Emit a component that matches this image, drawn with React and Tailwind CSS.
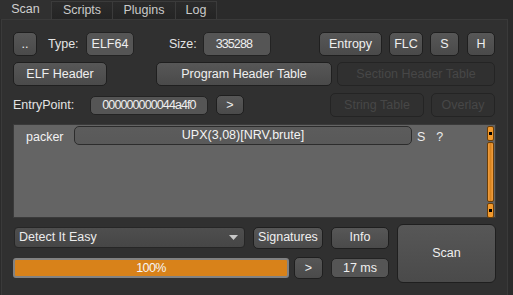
import React from 'react'

const btn =
  'flex items-center justify-center rounded-[5px] border border-[#1f1f1f] bg-gradient-to-b from-[#575757] to-[#4a4a4a] text-[#efefef]'
const field =
  'flex items-center justify-center rounded-[5px] border border-[#232323] bg-[#555555] text-[#efefef] tracking-[-0.9px]'
const disabled =
  'flex items-center justify-center rounded-[5px] border border-[#242424] bg-[#303030] text-[#474747]'

function Tab({ label, active, w }) {
  return (
    <div
      className={
        active
          ? 'flex h-[19px] items-center justify-center bg-[#303030] text-[#cfcfcf]'
          : 'flex h-[18px] items-center justify-center border-l border-t border-[#3b3b3b] bg-gradient-to-b from-[#2b2b2b] to-[#242424] text-[#cacaca]'
      }
      style={{ width: w }}
    >
      {label}
    </div>
  )
}

function ScrollBar() {
  return (
    <div className="ml-auto flex h-[92px] w-[7px] flex-col gap-[1px]">
      <div className="flex h-[15px] items-center justify-center rounded-[2px] border border-[#6a3e08] bg-[#f29a2e]">
        <div className="h-[3px] w-[3px] bg-black" />
      </div>
      <div className="flex-1 rounded-[2px] border border-[#6a3e08] bg-gradient-to-r from-[#f4a040] via-[#d88420] to-[#f4a040]" />
      <div className="flex h-[15px] items-center justify-center rounded-[2px] border border-[#6a3e08] bg-[#f29a2e]">
        <div className="h-[3px] w-[3px] bg-black" />
      </div>
    </div>
  )
}

export default function App() {
  return (
    <div className="h-[295px] w-[513px] overflow-hidden bg-[#2b2b2b] font-['Liberation_Sans',Arial,sans-serif] text-[12.5px] text-[#ececec]">
      {/* Tabs */}
      <div className="flex h-[19px] items-end">
        <Tab label="Scan" active w={51} />
        <Tab label="Scripts" w={61} />
        <Tab label="Plugins" w={63} />
        <div className="border-r border-[#3b3b3b]">
          <Tab label="Log" w={41} />
        </div>
      </div>

      {/* Panel */}
      <div className="ml-[1px] h-[277px] w-[507px] border border-[#3a3a3a] bg-[#303030] px-[11px] pt-[12px]">
        {/* Row 1 */}
        <div className="flex h-[24px] items-center">
          <div className={`${btn} h-[24px] w-[24px]`}>..</div>
          <span className="ml-[11px] w-[38px] text-[#e4e4e4]">Type:</span>
          <div className={`${field} h-[24px] w-[48px] tracking-normal`}>ELF64</div>
          <span className="ml-[35px] w-[34px] text-[#e4e4e4]">Size:</span>
          <div className={`${field} h-[24px] w-[68px] justify-end pr-[18px]`}>335288</div>
          <div className={`${btn} ml-[48px] h-[24px] w-[63px]`}>Entropy</div>
          <div className={`${btn} ml-[7px] h-[24px] w-[34px]`}>FLC</div>
          <div className={`${btn} ml-[7px] h-[24px] w-[29px]`}>S</div>
          <div className={`${btn} ml-[8px] h-[24px] w-[28px]`}>H</div>
        </div>

        {/* Row 2 */}
        <div className="mt-[6px] flex h-[24px] items-center">
          <div className={`${btn} h-[24px] w-[94px]`}>ELF Header</div>
          <div className={`${btn} ml-[49px] h-[24px] w-[176px]`}>Program Header Table</div>
          <div className={`${disabled} ml-[5px] h-[24px] w-[158px]`}>Section Header Table</div>
        </div>

        {/* Row 3 */}
        <div className="mt-[7px] flex h-[24px] items-center">
          <span className="w-[77px] text-[#e4e4e4]">EntryPoint:</span>
          <div className={`${field} h-[19px] w-[118px]`}>000000000044a4f0</div>
          <div className={`${btn} ml-[8px] h-[20px] w-[28px]`}>&gt;</div>
          <div className={`${disabled} ml-[86px] h-[24px] w-[94px]`}>String Table</div>
          <div className={`${disabled} ml-[7px] h-[24px] w-[64px]`}>Overlay</div>
        </div>

        {/* Results */}
        <div className="mt-[7px] flex h-[94px] w-[483px] items-start border border-[#3a3a3a] bg-[#646464] py-[1px] pr-[1px]">
          <span className="ml-[12px] mt-[2px] w-[48px] text-[#f2f2f2]">packer</span>
          <div className="flex h-[19px] w-[338px] items-center justify-center rounded-[5px] border border-[#2c2c2c] bg-gradient-to-b from-[#5c5c5c] to-[#595959] text-[#f4f4f4]">
            UPX(3,08)[NRV,brute]
          </div>
          <span className="ml-[5px] mt-[2px]">S</span>
          <span className="ml-[11px] mt-[2px]">?</span>
          <ScrollBar />
        </div>

        {/* Bottom */}
        <div className="mt-[6px] flex">
          <div className="flex flex-col pt-[3px]">
            <div className="flex h-[21px] items-center">
              <div className="ml-[1px] flex h-[21px] w-[231px] items-center justify-between rounded-[4px] border border-[#262626] bg-gradient-to-b from-[#4e4e4e] to-[#464646] pl-[4px] pr-[6px]">
                <span>Detect It Easy</span>
                <svg width="9" height="5" viewBox="0 0 9 5">
                  <path d="M0 0h9L4.5 5z" fill="#c8c8c8" />
                </svg>
              </div>
              <div className={`${btn} ml-[8px] h-[22px] w-[70px]`}>Signatures</div>
              <div className={`${btn} ml-[8px] h-[22px] w-[58px]`}>Info</div>
            </div>
            <div className="mt-[9px] flex h-[22px] items-center">
              <div className="flex h-[20px] w-[276px] items-center justify-center rounded-[3px] border-2 border-[#828282] bg-[#d8821a] tracking-[-0.6px] text-[#f6f6f6]">
                100%
              </div>
              <div className={`${btn} ml-[5px] h-[22px] w-[29px]`}>&gt;</div>
              <div className={`${field} ml-[8px] h-[20px] w-[58px] tracking-normal`}>17 ms</div>
            </div>
          </div>
          <div className={`${btn} ml-[8px] h-[59px] w-[99px] rounded-[6px]`}>Scan</div>
        </div>
      </div>
    </div>
  )
}
